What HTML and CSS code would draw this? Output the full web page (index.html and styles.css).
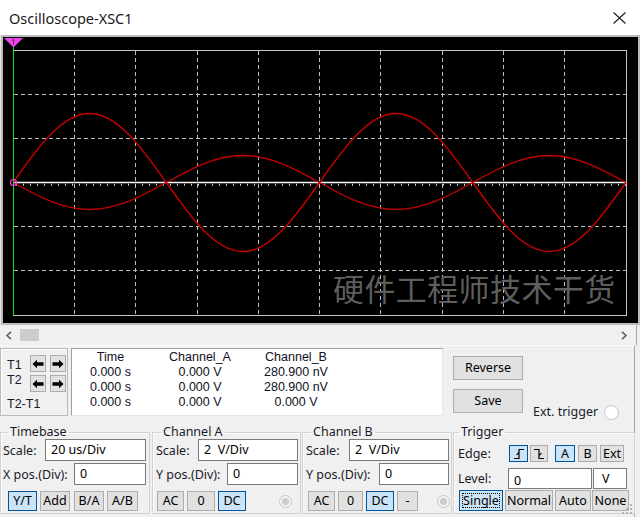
FILE: index.html
```html
<!DOCTYPE html>
<html lang="en">
<head>
<meta charset="utf-8">
<title>Oscilloscope-XSC1</title>
<link rel="stylesheet" href="styles.css">
</head>
<body>
<div class="window">
  <div class="titlebar">
    <span class="title">Oscilloscope-XSC1</span>
    <svg class="close" width="13" height="12" viewBox="0 0 13 12"><path d="M0.5 0.5 L12.5 11.5 M12.5 0.5 L0.5 11.5" stroke="#1e1e1e" stroke-width="1.1" fill="none"/></svg>
  </div>

  <div class="scope">
    <svg width="640" height="290" viewBox="0 0 640 290">
      <rect x="0" y="0" width="640" height="290" fill="#bcbcbc"/>
      <rect x="0" y="0" width="1" height="290" fill="#e6e6e6"/>
      <rect x="3" y="2" width="635" height="286" fill="#000"/>
      <!-- grid -->
      <g stroke="#bdbdbd" stroke-width="1" stroke-dasharray="4 3" fill="none">
        <line x1="74.5" y1="16" x2="74.5" y2="280"/>
        <line x1="135.5" y1="16" x2="135.5" y2="280"/>
        <line x1="197.5" y1="16" x2="197.5" y2="280"/>
        <line x1="258.5" y1="16" x2="258.5" y2="280"/>
        <line x1="319.5" y1="16" x2="319.5" y2="280"/>
        <line x1="380.5" y1="16" x2="380.5" y2="280"/>
        <line x1="442.5" y1="16" x2="442.5" y2="280"/>
        <line x1="503.5" y1="16" x2="503.5" y2="280"/>
        <line x1="564.5" y1="16" x2="564.5" y2="280"/>
        <line x1="14" y1="59.5" x2="626" y2="59.5"/>
        <line x1="14" y1="103.5" x2="626" y2="103.5"/>
        <line x1="14" y1="191.5" x2="626" y2="191.5"/>
        <line x1="14" y1="235.5" x2="626" y2="235.5"/>
      </g>
      <rect x="13.5" y="15.5" width="613" height="265" fill="none" stroke="#c4c4c4" stroke-width="1"/>
      <text class="wm" x="333" y="266">硬件工程师技术干货</text>
      <!-- white trace -->
      <line x1="13" y1="147.5" x2="626" y2="147.5" stroke="#f4f4f4" stroke-width="1.6"/>
      <line x1="16" y1="149.8" x2="626" y2="149.8" stroke="#d8d8d8" stroke-width="2" stroke-dasharray="1 6"/>
      <!-- channel traces -->
      <path d="M13 147.5 C38 112.15 61.89 78.5 89.63 78.5 S141.26 112.15 166.25 147.5 S215.14 216.5 242.88 216.5 S294.51 182.85 319.5 147.5 S368.39 78.5 396.13 78.5 S447.76 112.15 472.75 147.5 S521.64 216.5 549.38 216.5 S601.01 182.85 626 147.5" fill="none" stroke="#c40000" stroke-width="1.4"/>
      <path d="M13 147.5 C38 161.33 61.89 174.5 89.63 174.5 S141.26 161.33 166.25 147.5 S215.14 120.5 242.88 120.5 S294.51 133.67 319.5 147.5 S368.39 174.5 396.13 174.5 S447.76 161.33 472.75 147.5 S521.64 120.5 549.38 120.5 S601.01 133.67 626 147.5" fill="none" stroke="#c40000" stroke-width="1.4"/>
      <!-- cursor -->
      <line x1="13.5" y1="11" x2="13.5" y2="280" stroke="#16e016" stroke-width="1"/>
      <circle cx="13.5" cy="147.5" r="3" fill="none" stroke="#ff30ff" stroke-width="1.2"/>
      <polygon points="4,3 23,3 13.5,12.5" fill="#f040f0"/>
      <path d="M12.3 5.2 L13.6 4.4 V9.5" stroke="#3a3a00" stroke-width="1" fill="none"/>
    </svg>
  </div>

  <div class="hscroll">
    <svg class="chev" width="7" height="9" viewBox="0 0 7 9"><path d="M6 0.8 L2 4.5 L6 8.2" stroke="#606060" stroke-width="1.6" fill="none"/></svg>
    <div class="thumb"></div>
    <div class="track"></div>
    <svg class="chev" width="7" height="9" viewBox="0 0 7 9"><path d="M1 0.8 L5 4.5 L1 8.2" stroke="#606060" stroke-width="1.6" fill="none"/></svg>
  </div>

  <div class="readout">
    <div class="tbox">
      <div class="tlabels">
        <span class="tl t1">T1</span>
        <span class="tl t2">T2</span>
        <span class="tl t3">T2-T1</span>
      </div>
      <div class="tbtns">
        <button class="arr"><svg width="12" height="10" viewBox="0 0 12 10"><path d="M0.5 5 L5 0.8 V3.3 H11.5 V6.7 H5 V9.2 Z" fill="#000"/></svg></button>
        <button class="arr"><svg width="12" height="10" viewBox="0 0 12 10"><path d="M11.5 5 L7 0.8 V3.3 H0.5 V6.7 H7 V9.2 Z" fill="#000"/></svg></button>
        <button class="arr"><svg width="12" height="10" viewBox="0 0 12 10"><path d="M0.5 5 L5 0.8 V3.3 H11.5 V6.7 H5 V9.2 Z" fill="#000"/></svg></button>
        <button class="arr"><svg width="12" height="10" viewBox="0 0 12 10"><path d="M11.5 5 L7 0.8 V3.3 H0.5 V6.7 H7 V9.2 Z" fill="#000"/></svg></button>
      </div>
    </div>

    <div class="table">
      <span>Time</span><span>Channel_A</span><span>Channel_B</span>
      <span>0.000 s</span><span>0.000 V</span><span>280.900 nV</span>
      <span>0.000 s</span><span>0.000 V</span><span>280.900 nV</span>
      <span>0.000 s</span><span>0.000 V</span><span>0.000 V</span>
    </div>

    <div class="actions">
      <button class="btn wide">Reverse</button>
      <button class="btn wide">Save</button>
    </div>

    <div class="ext">
      <span>Ext. trigger</span>
      <span class="radio-ext"></span>
    </div>
  </div>

  <div class="controls">
    <fieldset class="grp g-time">
      <legend>Timebase</legend>
      <div class="row r1"><span>Scale:</span><div class="edit w101">20 us/Div</div></div>
      <div class="row r2"><span>X pos.(Div):</span><div class="edit w72">0</div></div>
      <div class="row r3 btnrow tb-btns">
        <button class="btn sel b29">Y/T</button>
        <button class="btn b30">Add</button>
        <button class="btn b30 gap4">B/A</button>
        <button class="btn b31">A/B</button>
      </div>
    </fieldset>

    <fieldset class="grp g-cha">
      <legend>Channel A</legend>
      <div class="row r1"><span>Scale:</span><div class="edit w100">2&nbsp; V/Div</div></div>
      <div class="row r2"><span>Y pos.(Div):</span><div class="edit w71">0</div></div>
      <div class="row r3 btnrow cha-btns">
        <button class="btn b27">AC</button>
        <button class="btn b28">0</button>
        <button class="btn sel b28">DC</button>
        <span class="radio-dis ra"></span>
      </div>
    </fieldset>

    <fieldset class="grp g-chb">
      <legend>Channel B</legend>
      <div class="row r1"><span>Scale:</span><div class="edit w100">2&nbsp; V/Div</div></div>
      <div class="row r2"><span>Y pos.(Div):</span><div class="edit w70">0</div></div>
      <div class="row r3 btnrow chb-btns">
        <button class="btn b27">AC</button>
        <button class="btn b25">0</button>
        <button class="btn sel b28">DC</button>
        <button class="btn b21">-</button>
        <span class="radio-dis rb"></span>
      </div>
    </fieldset>

    <fieldset class="grp g-trig">
      <legend>Trigger</legend>
      <div class="trow1">
        <span class="tlab">Edge:</span>
        <button class="btn sel e19"><svg width="12" height="12" viewBox="0 0 12 12"><path d="M1 10.5 H6 V1.5 H11 M3.6 6.8 L6 4.4" stroke="#000" stroke-width="1.2" fill="none"/></svg></button>
        <button class="btn e18"><svg width="12" height="12" viewBox="0 0 12 12"><path d="M1 1.5 H6 V10.5 H11 M6 7.6 L8.4 5.2" stroke="#000" stroke-width="1.2" fill="none"/></svg></button>
        <button class="btn sel e20 gap7">A</button>
        <button class="btn e19b">B</button>
        <button class="btn e24">Ext</button>
      </div>
      <div class="trow2">
        <span class="tlab">Level:</span>
        <div class="edit lvl">0</div>
        <div class="edit unit">V</div>
      </div>
      <div class="trow3">
        <button class="btn sel focus m44">Single</button>
        <button class="btn m48">Normal</button>
        <button class="btn m36">Auto</button>
        <button class="btn m37">None</button>
      </div>
    </fieldset>
  </div>

  <svg class="grip" width="10" height="10" viewBox="0 0 10 10">
    <g fill="#b4b4b4">
      <rect x="8" y="0" width="2" height="2"/>
      <rect x="4" y="4" width="2" height="2"/><rect x="8" y="4" width="2" height="2"/>
      <rect x="0" y="8" width="2" height="2"/><rect x="4" y="8" width="2" height="2"/><rect x="8" y="8" width="2" height="2"/>
    </g>
  </svg>
</div>
</body>
</html>
```

FILE: styles.css
```css
* { box-sizing: border-box; }
html, body { margin: 0; padding: 0; }
body {
  width: 640px;
  height: 517px;
  overflow: hidden;
  background: #f0f0f0;
  font-family: "Noto Sans", "Open Sans", sans-serif;
  font-size: 12.5px;
  color: #000;
}
button {
  font-family: inherit;
  font-size: 12.5px;
  color: #000;
  margin: 0;
  padding: 0;
}
.window {
  position: relative;
  width: 640px;
  height: 517px;
  display: flex;
  flex-direction: column;
}

/* title bar */
.titlebar {
  height: 35px;
  flex: none;
  background: #fff;
  display: flex;
  align-items: center;
  justify-content: space-between;
  padding: 0 14px 0 9px;
}
.title { font-size: 14.5px; color: #1a1a1a; }
.close { display: block; margin-top: 1px; }

/* scope */
.scope { height: 290px; flex: none; }
.scope svg { display: block; }
.wm {
  font-family: "Noto Sans CJK SC", sans-serif;
  font-size: 31px;
  fill: #5e5e5e;
  letter-spacing: 0.4px;
}

/* scrollbar */
.hscroll {
  height: 20px;
  flex: none;
  display: flex;
  align-items: center;
  padding: 0 8px 0 5px;
  border-right: 1px solid #a8a8a8;
  width: 637px;
}
.chev { display: block; flex: none; }
.thumb {
  width: 19px;
  height: 12px;
  background: #cdcdcd;
  margin-left: 8px;
  flex: none;
}
.track { flex: 1; }

/* readout */
.readout {
  height: 80px;
  flex: none;
  width: 635px;
  border-right: 1px solid #a8a8a8;
  border-top: 1px solid #fbfbfb;
  display: flex;
  align-items: flex-start;
  padding-top: 2px;
}
.tbox {
  width: 68px;
  height: 68px;
  flex: none;
  border: 1px solid #bababa;
  box-shadow: inset 1px 1px 0 #fff;
  display: flex;
  padding: 6px 0 0 6px;
  font-family: "Liberation Sans", Arial, sans-serif;
  font-size: 12.5px;
}
.tlabels {
  width: 23px;
  flex: none;
  display: flex;
  flex-direction: column;
  color: #1a1a2a;
}
.tl { line-height: 15px; white-space: nowrap; }
.t1 { margin-top: 3px; }
.t2 { margin-top: 0; }
.t3 { margin-top: 9px; }
.tbtns {
  width: 40px;
  flex: none;
  display: grid;
  grid-template-columns: 16px 16px;
  grid-auto-rows: 17px;
  column-gap: 4px;
  row-gap: 3px;
}
.arr {
  width: 16px;
  height: 17px;
  background: #e1e1e1;
  border: 1px solid #adadad;
  display: flex;
  align-items: center;
  justify-content: center;
}
.arr svg { display: block; }

.table {
  margin-left: 3px;
  width: 372px;
  height: 68px;
  flex: none;
  background: #fff;
  border-top: 1px solid #a0a0a0;
  border-left: 1px solid #a0a0a0;
  border-bottom: 1px solid #e6e6e6;
  border-right: 1px solid #e6e6e6;
  display: grid;
  grid-template-columns: 77px 102px 90px;
  grid-auto-rows: 15px;
  line-height: 15px;
  padding-top: 1px;
  text-align: center;
  color: #101024;
  font-family: "Liberation Sans", Arial, sans-serif;
  font-size: 12.5px;
}

.actions {
  margin-left: 10px;
  padding-top: 8px;
  display: flex;
  flex-direction: column;
  gap: 9px;
  flex: none;
}
.btn {
  height: 20px;
  background: #e1e1e1;
  border: 1px solid #adadad;
  display: flex;
  align-items: center;
  justify-content: center;
  line-height: 16px;
  flex: none;
}
.btn.wide { width: 70px; height: 24px; }
.btn.sel { background: #cce4f7; border-color: #005499; }
.btn.focus { position: relative; }
.btn.focus::after {
  content: "";
  position: absolute;
  left: 2px; top: 2px; right: 2px; bottom: 2px;
  border: 1px dotted #000;
}

.ext {
  margin-left: 10px;
  margin-top: 56px;
  display: flex;
  align-items: center;
  line-height: 16px;
  color: #1a1a2a;
}
.radio-ext {
  width: 15px;
  height: 15px;
  border-radius: 50%;
  background: #fff;
  border: 1px solid #c4c4c4;
  margin-left: 6px;
  flex: none;
}

/* controls */
.controls {
  height: 92px;
  flex: none;
  width: 635px;
  border-right: 1px solid #a8a8a8;
  display: flex;
  align-items: flex-start;
}
.grp {
  margin: 0;
  height: 89px;
  border: 1px solid #d2d2d2;
  box-shadow: inset 1px 1px 0 #fbfbfb;
  padding: 0 2px 1px 3px;
  min-width: 0;
  flex: none;
}
.grp legend {
  padding: 0 2px;
  line-height: 14px;
  margin-left: 5px;
  color: #1a1a2a;
}
.g-time { width: 150px; padding-left: 2px; padding-right: 3px; }
.g-time legend { margin-left: 5px; }
.g-cha { width: 149px; margin-left: 2px; }
.g-chb { width: 150px; margin-left: 1px; }
.g-trig { width: 182px; margin-left: 1px; padding-left: 4px; }
.g-trig legend { margin-left: 1px; }

.row {
  display: flex;
  align-items: center;
  color: #1a1a2a;
}
.row > span { white-space: nowrap; }
.row .edit { margin-left: auto; }
.r1 { height: 22px; }
.r2 { height: 22px; margin-top: 2px; }
.r3 { height: 20px; margin-top: 6px; }
.btnrow { gap: 3px; }
.tb-btns { padding-left: 5px; }
.cha-btns { padding-left: 1px; }
.chb-btns { padding-left: 2px; }
.gap4 { margin-left: 1px; }

.edit {
  height: 22px;
  background: #fff;
  border: 1px solid #7a7a7a;
  padding-left: 5px;
  line-height: 20px;
  white-space: nowrap;
  color: #000;
  flex: none;
}
.w101 { width: 101px; }
.w100 { width: 100px; }
.w72 { width: 72px; }
.w71 { width: 71px; }
.w70 { width: 70px; }

.b21 { width: 21px; }
.b25 { width: 25px; }
.b27 { width: 27px; }
.b28 { width: 28px; }
.b29 { width: 29px; }
.b30 { width: 30px; }
.b31 { width: 31px; }

.radio-dis {
  width: 13px;
  height: 13px;
  border-radius: 50%;
  border: 1px solid #c6c6c6;
  background: radial-gradient(circle, #cdcdcd 0 3.4px, #f4f4f4 3.9px);
  flex: none;
}
.ra { margin-left: 30px; }
.rb { margin-left: 16px; }

.trow1, .trow2, .trow3 { display: flex; align-items: center; color: #1a1a2a; }
.tlab { width: 51px; flex: none; }
.trow1 { height: 17px; margin-top: 6px; }
.trow1 .btn { height: 17px; }
.e19 { width: 19px; }
.e18 { width: 18px; margin-left: 2px; }
.e20 { width: 20px; }
.gap7 { margin-left: 7px; }
.e19b { width: 19px; margin-left: 3px; }
.e24 { width: 24px; margin-left: 3px; }
.btn svg { display: block; }

.trow2 { height: 21px; margin-top: 6px; }
.trow2 .tlab { width: 50px; }
.edit.lvl { width: 84px; height: 21px; line-height: 24px; }
.edit.unit { width: 34px; height: 21px; margin-left: 1px; padding-left: 8px; line-height: 19px; }

.trow3 { height: 21px; margin-top: 1px; }
.trow3 .btn { height: 21px; }
.m44 { width: 44px; margin-left: 1px; }
.m48 { width: 48px; margin-left: 2px; }
.m36 { width: 36px; margin-left: 2px; }
.m37 { width: 37px; margin-left: 1px; }

.grip {
  position: absolute;
  right: 8px;
  bottom: 3px;
  display: block;
}
```
